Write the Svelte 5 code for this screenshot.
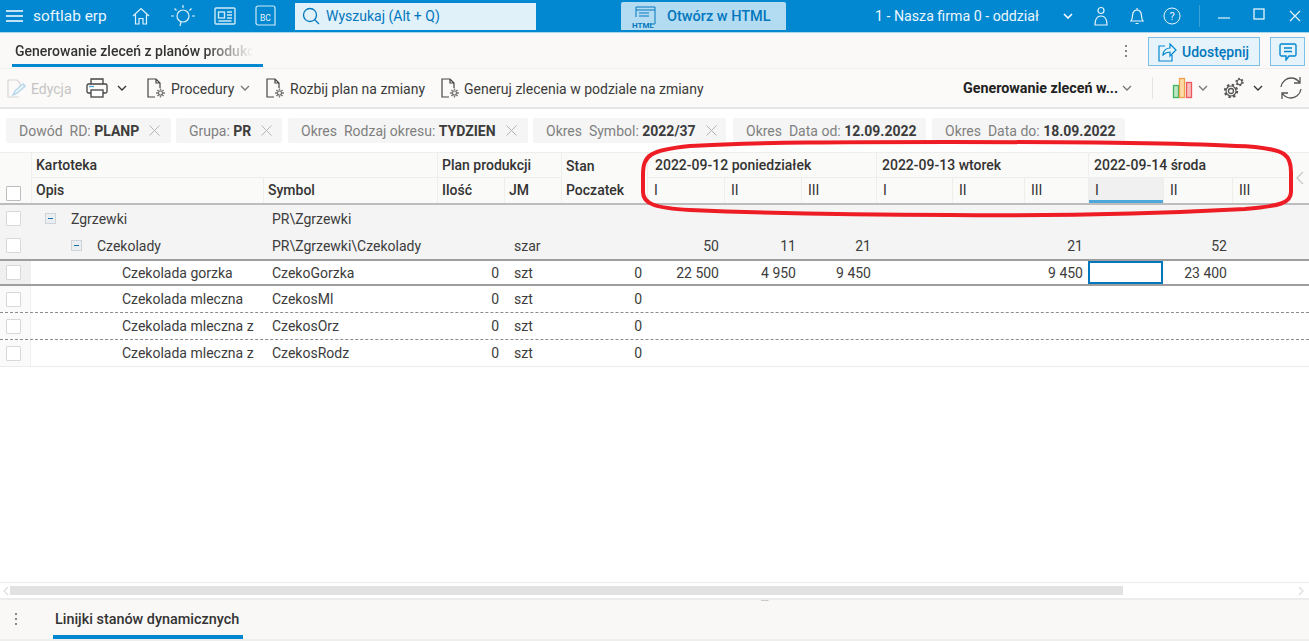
<script>
  const chips = [
    { label: 'Dowód  RD: ', value: 'PLANP', close: true, cls: 'c1' },
    { label: 'Grupa: ', value: 'PR', close: true, cls: 'c2' },
    { label: 'Okres  Rodzaj okresu: ', value: 'TYDZIEN', close: true, cls: 'c3' },
    { label: 'Okres  Symbol: ', value: '2022/37', close: true, cls: 'c4' },
    { label: 'Okres  Data od: ', value: '12.09.2022', close: false, cls: 'c5' },
    { label: 'Okres  Data do: ', value: '18.09.2022', close: false, cls: 'c6' }
  ];
  const shifts = ['I', 'II', 'III', 'I', 'II', 'III', 'I', 'II', 'III'];
  const rows = [
    { kind: 'group', indent: 'lv0', tree: true, opis: 'Zgrzewki', symbol: 'PR\\Zgrzewki', qty: '', jm: '', start: '', vals: ['', '', '', '', '', '', '', '', ''] },
    { kind: 'group', indent: 'lv1', tree: true, opis: 'Czekolady', symbol: 'PR\\Zgrzewki\\Czekolady', qty: '', jm: 'szar', start: '', vals: ['50', '11', '21', '', '', '21', '', '52', ''] },
    { kind: 'current', indent: 'lv2', opis: 'Czekolada gorzka', symbol: 'CzekoGorzka', qty: '0', jm: 'szt', start: '0', vals: ['22 500', '4 950', '9 450', '', '', '9 450', '', '23 400', ''] },
    { kind: 'plain', indent: 'lv2', opis: 'Czekolada mleczna', symbol: 'CzekosMl', qty: '0', jm: 'szt', start: '0', vals: ['', '', '', '', '', '', '', '', ''] },
    { kind: 'dashed', indent: 'lv2', opis: 'Czekolada mleczna z', symbol: 'CzekosOrz', qty: '0', jm: 'szt', start: '0', vals: ['', '', '', '', '', '', '', '', ''] },
    { kind: 'dashed', indent: 'lv2', opis: 'Czekolada mleczna z', symbol: 'CzekosRodz', qty: '0', jm: 'szt', start: '0', vals: ['', '', '', '', '', '', '', '', ''] }
  ];
</script>

{#snippet chev(cls = '')}
  <svg class="chev {cls}" viewBox="0 0 10 6" width="10" height="6"><path d="M1 1l4 4 4-4" fill="none" stroke="currentColor" stroke-width="1.3" /></svg>
{/snippet}

{#snippet docgear()}
  <svg class="docgear" viewBox="0 0 21 22" width="21" height="22" fill="none" stroke="#444" stroke-width="1.2">
    <path d="M9 20H2V2h8l4 4v5M10 2v4h4" />
    <circle cx="14.5" cy="16" r="2" stroke="#777" />
    <path d="M14.5 11.5v2M14.5 18.5v2M10 16h2M17 16h2M11.4 12.9l1.4 1.4M16.2 17.7l1.4 1.4M11.4 19.1l1.4-1.4M16.2 14.3l1.4-1.4" stroke="#777" stroke-width="1.4" />
  </svg>
{/snippet}

<div class="page">
  <header class="topbar">
    <svg class="burger" viewBox="0 0 17 12" width="17" height="12"><path d="M0 1h17M0 6h17M0 11h17" stroke="#fff" stroke-width="1.5" /></svg>
    <span class="brand">softlab erp</span>
    <svg class="ti home" viewBox="0 0 18 18" width="18" height="18" fill="none" stroke="#dff1fb" stroke-width="1.2"><path d="M1 9l8-7.5L17 9M3.5 7.5V17h3.5v-5.5h4V17h3.5V7.5" /></svg>
    <svg class="ti bulb" viewBox="0 0 24 24" width="24" height="24" fill="none" stroke="#dff1fb" stroke-width="1.2"><circle cx="12" cy="12" r="6" /><path d="M10 18l-1 4M12 1v3M3.5 4.5l2 2M20.5 4.5l-2 2M0 12h3M21 12h3" /></svg>
    <svg class="ti news" viewBox="0 0 22 18" width="22" height="18" fill="none" stroke="#cfe9f8" stroke-width="1.4"><rect x="1" y="1" width="20" height="16" rx="1" /><rect x="4.5" y="5" width="6" height="6" /><path d="M13 5h5M13 8h5M13 11h5M4.5 14h13" /></svg>
    <svg class="ti bc" viewBox="0 0 21 22" width="21" height="22" fill="none" stroke="#cfe9f8" stroke-width="1.2"><path d="M3 1h15a2 2 0 0 1 2 2v17H3a2 2 0 0 1-2-2V3a2 2 0 0 1 2-2z" /><text x="10.5" y="16" font-size="8.5" fill="#e6f4fc" stroke="none" text-anchor="middle" font-family="Roboto, sans-serif">BC</text></svg>
    <div class="search">
      <svg viewBox="0 0 18 18" width="18" height="18" fill="none" stroke="#0277bd" stroke-width="1.3"><circle cx="8" cy="8" r="6.5" /><path d="M12.5 12.5L17 17" /></svg>
      <span>Wyszukaj (Alt + Q)</span>
    </div>
    <div class="html-btn">
      <svg viewBox="0 0 25 25" width="25" height="25" fill="none" stroke="#0277bd" stroke-width="1"><path d="M4 13V3h19v17h-5M4 6h19M7 9h10M7 12h10" /><text x="0" y="24" font-size="8" font-weight="700" fill="#0277bd" stroke="none" font-family="Roboto, sans-serif">HTML</text></svg>
      <span>Otwórz w HTML</span>
    </div>
    <span class="company">1 - Nasza firma 0 - oddział</span>
    <svg class="company-chev" viewBox="0 0 10 6" width="10" height="6"><path d="M1 1l4 4 4-4" fill="none" stroke="#fff" stroke-width="1.6" /></svg>
    <svg class="ti user" viewBox="0 0 16 20" width="16" height="20" fill="none" stroke="#e6f4fc" stroke-width="1.2"><circle cx="8" cy="4.5" r="3" /><path d="M2 19c0-6 2-9 6-9s6 3 6 9z" /></svg>
    <svg class="ti bell" viewBox="0 0 14 18" width="14" height="18" fill="none" stroke="#e6f4fc" stroke-width="1.2"><path d="M1 14c2-2 1-5 2-8 .7-2 2-3 4-3s3.3 1 4 3c1 3 0 6 2 8zM5.500 16.500h3M7 1v2" /></svg>
    <svg class="ti help" viewBox="0 0 18 18" width="18" height="18" fill="none" stroke="#e6f4fc" stroke-width="1"><circle cx="9" cy="9" r="8" /><text x="9" y="13" font-size="11" fill="#e6f4fc" stroke="none" text-anchor="middle" font-family="Roboto, sans-serif">?</text></svg>
    <i class="top-sep"></i>
    <svg class="win min" viewBox="0 0 12 12" width="12" height="12"><path d="M0 8h12" stroke="#b3dcf2" stroke-width="1.5" /></svg>
    <svg class="win max" viewBox="0 0 12 12" width="12" height="12"><rect x="1" y="1" width="10" height="10" fill="none" stroke="#e6f4fc" stroke-width="1.3" /></svg>
    <svg class="win close" viewBox="0 0 12 12" width="12" height="12"><path d="M1 1l10 10M11 1L1 11" stroke="#e6f4fc" stroke-width="1.2" /></svg>
  </header>

  <div class="tabs">
    <div class="tab"><span>Generowanie zleceń z planów produkcji</span></div>
    <div class="kebab dark"><i></i><i></i><i></i></div>
    <div class="share">
      <svg viewBox="0 0 20 20" width="20" height="20" fill="none" stroke="#0288d1" stroke-width="1.2"><path d="M8 4H2v15h13v-6M6 13c0-5 4-7 7-7V2l6 6-6 6v-4c-3 0-5 1-7 3z" /></svg>
      <span>Udostępnij</span>
    </div>
    <div class="chat">
      <svg viewBox="0 0 18 18" width="18" height="18" fill="none" stroke="#0288d1" stroke-width="1.4"><path d="M2.500 1h13A1.500 1.500 0 0 1 17 2.500v9a1.500 1.500 0 0 1-1.500 1.500H10l-3 4v-4H2.500A1.500 1.500 0 0 1 1 11.500v-9A1.500 1.500 0 0 1 2.500 1zM5 5h8M5 8.500h8" /></svg>
    </div>
  </div>

  <div class="toolbar">
    <div class="tool disabled edit">
      <svg viewBox="0 0 20 20" width="20" height="20" fill="none" stroke="#d5d5d5" stroke-width="1.2"><path d="M13 19H2V2h9l3 3v4" /><path d="M7 17l2-4 8-7 2 2-8 7z" stroke="#b7d9ec" stroke-width="1.6" /></svg>
      <span>Edycja</span>
    </div>
    <div class="tool printer">
      <svg viewBox="0 0 22 22" width="22" height="22" fill="none" stroke="#444" stroke-width="1.3"><path d="M5 7V2h12v5" /><rect x="1" y="7" width="20" height="9" rx="1.5" /><rect x="5" y="13" width="12" height="7" fill="#fff" /><path d="M3 9.500h5" stroke="#4ea6d8" /></svg>
      {@render chev('dark')}
    </div>
    <div class="tool proc">{@render docgear()}<span class="proc-t">Procedury</span>{@render chev()}</div>
    <div class="tool rozbij">{@render docgear()}<span class="rozbij-t">Rozbij plan na zmiany</span></div>
    <div class="tool generuj">{@render docgear()}<span class="generuj-t">Generuj zlecenia w podziale na zmiany</span></div>
    <div class="tool view"><b>Generowanie zleceń w...</b>{@render chev()}</div>
    <i class="tool-sep"></i>
    <svg class="bars" viewBox="0 0 22 22" width="22" height="22"><rect x="1.500" y="8.500" width="5" height="12" fill="#bfe6c4" stroke="#3fb45f" stroke-width="1.300" /><rect x="7.500" y="1.500" width="5" height="19" fill="#fbdca6" stroke="#f0a04e" stroke-width="1.300" /><rect x="14.500" y="5.500" width="5" height="15" fill="#f8bcbc" stroke="#ea5a5a" stroke-width="1.300" /></svg>
    <span class="chev-a">{@render chev()}</span>
    <svg class="gears" viewBox="0 0 21 22" width="21" height="22" fill="none" stroke="#555"><circle cx="8" cy="14" r="2.500" stroke-width="1.300" /><circle cx="8" cy="14" r="5" stroke-width="1.200" /><circle cx="8" cy="14" r="6.200" stroke-width="2" stroke-dasharray="2.400 2.470" /><circle cx="16.500" cy="5" r="2.500" stroke-width="1.200" /><circle cx="16.500" cy="5" r="3.500" stroke-width="1.400" stroke-dasharray="1.800 1.860" /></svg>
    <span class="chev-b">{@render chev('dark')}</span>
    <svg class="refresh" viewBox="0 0 24 24" width="24" height="24" fill="none" stroke="#555" stroke-width="1.300"><path d="M2 11C3 5 8 2 12 2c4 0 7 2 9 5M22 13c-1 6-6 9-10 9-4 0-7-2-9-5M21 1v6h-6M3 23v-6h6" /></svg>
  </div>

  <div class="chips">
    {#each chips as c}
      <div class="chip {c.cls}">
        <span class="lbl">{c.label}</span><b>{c.value}</b>
        {#if c.close}
          <svg viewBox="0 0 11 11" width="11" height="11"><path d="M.5.500l10 10M10.500.500l-10 10" stroke="#b5b5b5" stroke-width="1" /></svg>
        {/if}
      </div>
    {/each}
  </div>

  <div class="grid head">
    <div class="hc check-h"><i class="box"></i></div>
    <div class="hc kart">Kartoteka</div>
    <div class="hc plan">Plan produkcji</div>
    <div class="hc stan">Stan</div>
    <div class="hc d1">2022-09-12 poniedziałek</div>
    <div class="hc d2">2022-09-13 wtorek</div>
    <div class="hc d3">2022-09-14 środa</div>
    <div class="hc arrow-h">
      <svg viewBox="0 0 8 14" width="8" height="14"><path d="M7 1L1 7l6 6" fill="none" stroke="#c8c8c8" stroke-width="1.3" /></svg>
    </div>
    <div class="hc sub">Opis</div>
    <div class="hc sub">Symbol</div>
    <div class="hc sub">Ilość</div>
    <div class="hc sub">JM</div>
    <div class="hc sub">Poczatek</div>
    {#each shifts as s, i}
      <div class="hc sub shift" class:active={i === 6}>{s}</div>
    {/each}
  </div>

  <div class="body">
    {#each rows as r}
      <div class="grid row {r.kind}">
        <div class="cell chk"><i class="box"></i></div>
        <div class="cell opis {r.indent}">
          {#if r.tree}<i class="tree"></i>{/if}<span>{r.opis}</span>
        </div>
        <div class="cell sym">{r.symbol}</div>
        <div class="cell num">{r.qty}</div>
        <div class="cell jm">{r.jm}</div>
        <div class="cell num">{r.start}</div>
        {#each r.vals as v, i}
          <div class="cell num" class:selected={r.kind === 'current' && i === 6}>{v}</div>
        {/each}
      </div>
    {/each}
  </div>

  <div class="hscroll">
    <svg viewBox="0 0 6 10" width="6" height="10"><path d="M5 1L1 5l4 4" fill="none" stroke="#ddd" stroke-width="1.2" /></svg>
    <div class="track"><div class="thumb"></div></div>
    <svg viewBox="0 0 6 10" width="6" height="10"><path d="M1 1l4 4-4 4" fill="none" stroke="#ddd" stroke-width="1.2" /></svg>
  </div>

  <div class="bottom">
    <span class="grip">---</span>
    <div class="kebab"><i></i><i></i><i></i></div>
    <div class="btab">Linijki stanów dynamicznych</div>
  </div>

  <svg class="ring" viewBox="0 0 1309 641" width="1309" height="641">
    <path d="M643 175C643 155 650 150 690 146C760 142 850 142 950 142C1080 142 1190 143 1255 147C1285 150 1291 155 1291 172V192C1291 203 1280 206 1245 209C1150 214 1040 216 950 215C850 215 760 213 690 210C655 208 643 204 643 192Z" fill="none" stroke="#ee1c25" stroke-width="4" />
  </svg>
</div>

<style>
  :global(body) { margin: 0; background: #fff; }
  .page {
    position: relative;
    width: 1309px;
    height: 641px;
    overflow: hidden;
    display: flex;
    flex-direction: column;
    font-family: Roboto, "Liberation Sans", sans-serif;
    font-size: 14px;
    color: #3c3c3c;
  }
  i { display: block; font-style: normal; }
  svg { flex: none; display: block; }

  .topbar {
    flex: none;
    height: 33px;
    box-sizing: border-box;
    background: #0288d1;
    border-bottom: 1px solid #a9d6ef;
    display: flex;
    align-items: center;
    color: #fff;
  }
  .burger { margin-left: 6px; }
  .brand { margin-left: 10px; font-size: 15.4px; width: 76px; color: #eaf6fd; white-space: nowrap; }
  .home { margin-left: 23px; }
  .bulb { margin-left: 21px; }
  .news { margin-left: 19px; }
  .bc { margin-left: 19px; }
  .search {
    margin-left: 19px;
    width: 241px;
    height: 27px;
    background: #e1f1fa;
    display: flex;
    align-items: center;
    gap: 6px;
    padding-left: 7px;
    box-sizing: border-box;
    color: #0277bd;
    font-size: 14px;
  }
  .html-btn {
    margin-left: 85px;
    width: 165px;
    height: 28px;
    background: #b3dcf2;
    border-radius: 2px 2px 0 0;
    display: flex;
    align-items: center;
    gap: 10px;
    padding-left: 11px;
    box-sizing: border-box;
    color: #0277bd;
    font-size: 14.5px;
    font-weight: 500;
  }
  .company { margin-left: 89px; width: 165px; color: #eaf6fd; font-size: 14.2px; white-space: nowrap; }
  .company-chev { margin-left: 23px; }
  .user { margin-left: 20px; }
  .bell { margin-left: 21px; }
  .help { margin-left: 19px; }
  .top-sep { margin-left: 18px; width: 1px; height: 22px; background: #3aa2db; }
  .min { margin-left: 18px; }
  .max { margin-left: 23px; margin-bottom: 5px; }
  .close { margin-left: 24px; margin-bottom: 1px; }

  .tabs {
    flex: none;
    height: 35px;
    background: #faf9f7;
    display: flex;
    align-items: flex-start;
  }
  .tab {
    margin-left: 12px;
    width: 251px;
    height: 34px;
    box-sizing: border-box;
    padding: 10px 0 0 3px;
    border-bottom: 3px solid #0288d1;
    white-space: nowrap;
    font-weight: 500;
    color: #333;
  }
  .tab span {
    display: block;
    width: 248px;
    overflow: hidden;
    -webkit-mask-image: linear-gradient(90deg, #000 76%, #0000 96%);
    mask-image: linear-gradient(90deg, #000 76%, #0000 96%);
  }
  .kebab { display: flex; flex-direction: column; gap: 3px; }
  .kebab i { width: 2px; height: 2px; background: #888; }
  .tabs .kebab { margin-left: 862px; align-self: center; }
  .share {
    margin-left: 21px;
    margin-top: 4px;
    width: 112px;
    height: 29px;
    box-sizing: border-box;
    border: 1px solid #7cc0e6;
    background: #e6f3fa;
    display: flex;
    align-items: center;
    gap: 5px;
    padding-left: 8px;
    color: #0277bd;
    font-weight: 500;
  }
  .chat {
    margin-left: 10px;
    margin-top: 4px;
    width: 35px;
    height: 29px;
    box-sizing: border-box;
    border: 1px solid #7cc0e6;
    background: #e6f3fa;
    display: flex;
    align-items: center;
    justify-content: center;
  }

  .toolbar {
    flex: none;
    height: 41px;
    box-sizing: border-box;
    background: #fbfaf8;
    border-top: 1px solid #f1f0ee;
    border-bottom: 2px solid #e6e6e6;
    display: flex;
    align-items: center;
    white-space: nowrap;
    color: #3a3a3a;
  }
  .tool { display: flex; align-items: center; }
  .tool span { padding-top: 1px; }
  .disabled { color: #c4c4c4; }
  .edit { margin-left: 6px; gap: 5px; width: 80px; }
  .printer { gap: 9px; }
  .proc { margin-left: 19px; gap: 4px; }
  .proc-t { width: 63px; }
  .proc .chev { margin-left: 2px; }
  .rozbij { margin-left: 15px; gap: 4px; }
  .rozbij-t { width: 137px; }
  .generuj { margin-left: 13px; gap: 3px; }
  .generuj-t { width: 243px; }
  .view { margin-left: 256px; gap: 4px; color: #222; }
  .view b { font-weight: 700; font-size: 14.3px; width: 155px; }
  .chev { color: #777; }
  .chev.dark { color: #333; }
  .tool-sep { margin-left: 20px; width: 1px; height: 22px; background: #e4e4e4; }
  .bars { margin-left: 19px; }
  .chev-a { margin-left: 4px; }
  .gears { margin-left: 15px; }
  .chev-b { margin-left: 9px; }
  .refresh { margin-left: 16px; }

  .chips {
    flex: none;
    height: 43px;
    box-sizing: border-box;
    padding: 9px 0 0 6px;
    background: #fff;
    display: flex;
    white-space: nowrap;
  }
  .chip {
    height: 25px;
    background: #f5f5f5;
    border-radius: 2px;
    display: flex;
    align-items: center;
    box-sizing: border-box;
    padding-left: 13px;
    color: #808080;
  }
  .lbl { white-space: pre; }
  .chip b { color: #3c3c3c; font-weight: 700; }
  .chip svg { margin-left: 10px; }
  .c1 { width: 165px; }
  .c2 { width: 106px; margin-left: 5px; }
  .c3 { width: 240px; margin-left: 6px; }
  .c4 { width: 193px; margin-left: 5px; }
  .c5 { width: 193px; margin-left: 7px; }
  .c6 { width: 193px; margin-left: 6px; }

  .grid {
    display: grid;
    grid-template-columns: 31px 232px 174px 67px 57px 86px 77px 77px 75px 76px 72px 64px 75px 69px 58px 19px;
    width: 1309px;
  }
  .head {
    flex: none;
    grid-template-rows: 25px 25px;
    height: 53px;
    box-sizing: border-box;
    background: #fafaf8;
    border-top: 1px solid #eeeeec;
    border-bottom: 2px solid #bdbdbd;
    color: #333;
    font-weight: 500;
  }
  .hc {
    box-sizing: border-box;
    padding-left: 4px;
    display: flex;
    align-items: center;
    border-left: 1px solid #eeeeec;
    border-bottom: 1px solid #eeeeec;
    white-space: nowrap;
    min-width: 0;
  }
  .sub { border-bottom: 0; padding-bottom: 2px; }
  .check-h { grid-row: 1 / 3; grid-column: 1; border: 0; padding: 33px 0 0 6px; align-items: flex-start; }
  .kart { grid-column: 2 / 4; grid-row: 1; }
  .plan { grid-column: 4 / 6; grid-row: 1; }
  .stan { grid-column: 6; grid-row: 1; border-bottom: 0; }
  .d1 { grid-column: 7 / 10; grid-row: 1; padding-left: 7px; }
  .d2 { grid-column: 10 / 13; grid-row: 1; padding-left: 5px; }
  .d3 { grid-column: 13 / 16; grid-row: 1; padding-left: 5px; }
  .arrow-h { grid-column: 16; grid-row: 1 / 3; border: 0; padding: 0 0 0 6px; }
  .shift { font-weight: 400; padding-left: 6px; }
  .active {
    background: #f0f0f0;
    box-shadow: inset 0 -3px 0 #4fa8dc;
  }
  .box {
    width: 15px;
    height: 15px;
    box-sizing: border-box;
    background: #fff;
    border: 1px solid #d8d8d8;
    border-radius: 1px;
  }
  .check-h .box { border-color: #bdbdbd; }

  .body { flex: 1; background: #fff; }
  .row { height: 27px; box-sizing: border-box; color: #3c3c3c; align-items: stretch; }
  .cell {
    box-sizing: border-box;
    display: flex;
    align-items: center;
    white-space: nowrap;
    min-width: 0;
    overflow: hidden;
  }
  .chk { padding-left: 6px; background: #fafafa; border-right: 1px solid #f0f0f0; }
  .group { background: #f4f4f4; }
  .group .chk { background: #f4f4f4; border-right: 0; }
  .current { border-top: 2px solid #9e9e9e; border-bottom: 2px solid #9e9e9e; }
  .current .chk { background: #f0f0f0; }
  .plain, .dashed { border-bottom: 1px dashed #8c8c8c; }
  .row:last-child { border-bottom: 1px solid #ececec; }
  .lv0 { padding-left: 14px; }
  .lv1 { padding-left: 40px; }
  .lv2 { padding-left: 91px; }
  .tree {
    width: 11px;
    height: 11px;
    box-sizing: border-box;
    margin-right: 15px;
    flex: none;
    background: linear-gradient(#1f6fa8, #1f6fa8) center / 5px 1px no-repeat, #e9eef2;
    border: 1px solid #cfd4d8;
  }
  .sym { padding-left: 9px; }
  .jm { padding-left: 10px; }
  .num { justify-content: flex-end; padding-right: 5px; }
  .selected { outline: 2px solid #0277bd; outline-offset: -2px; }

  .hscroll {
    flex: none;
    height: 18px;
    box-sizing: border-box;
    border-top: 1px solid #ececec;
    border-bottom: 2px solid #ececec;
    display: flex;
    align-items: center;
    padding: 0 5px 0 3px;
    width: 1309px;
  }
  .track { flex: 1; margin: 0 1px; height: 9px; }
  .thumb { width: 1113px; height: 9px; background: #e2e2e2; }

  .bottom {
    flex: none;
    height: 41px;
    box-sizing: border-box;
    background: #f9f8f6;
    border-bottom: 2px solid #eeeeec;
    display: flex;
    align-items: flex-start;
    position: relative;
  }
  .grip {
    position: absolute;
    left: 761px;
    top: -5px;
    font-size: 9px;
    color: #b0b0b0;
  }
  .bottom .kebab { margin: 13px 0 0 15px; }
  .btab {
    margin-left: 36px;
    width: 190px;
    height: 39px;
    box-sizing: border-box;
    padding: 11px 0 0 2px;
    border-bottom: 4px solid #0288d1;
    font-weight: 500;
    color: #333;
    font-size: 14.4px;
    white-space: nowrap;
  }
  .ring { position: absolute; left: 0; top: 0; pointer-events: none; }
</style>
